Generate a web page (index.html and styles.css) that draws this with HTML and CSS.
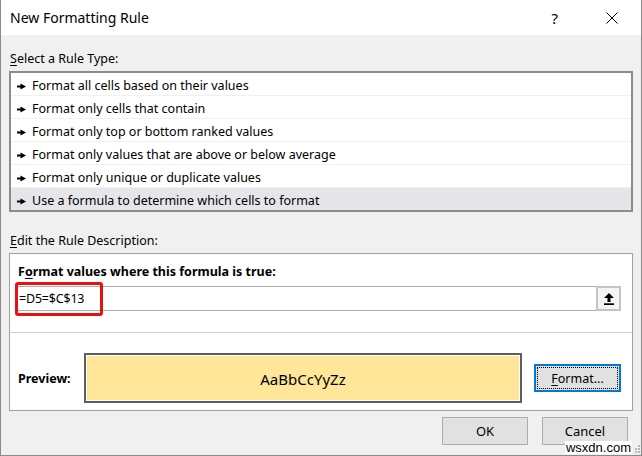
FILE: index.html
```html
<!DOCTYPE html>
<html>
<head>
<meta charset="utf-8">
<link rel="stylesheet" href="styles.css">
</head>
<body>
<div class="window">
  <div class="titlebar">
    <span class="title">New Formatting Rule</span>
    <div class="tb-buttons">
      <span class="help">?</span>
      <span class="close"><svg width="12" height="12" viewBox="0 0 12 12"><path d="M0.5 0.5 L11.5 11.5 M11.5 0.5 L0.5 11.5" stroke="#000" stroke-width="1" fill="none"/></svg></span>
    </div>
  </div>
  <div class="body">
    <div class="label label-top"><u>S</u>elect a Rule Type:</div>
    <div class="listbox">
      <div class="row"><svg class="arrow" width="9" height="7" viewBox="0 0 9 7"><path d="M0 2.6 H3.5 V0.5 L9 3.5 L3.5 6.5 V4.4 H0 Z" fill="#000"/></svg>Format all cells based on their values</div>
      <div class="row"><svg class="arrow" width="9" height="7" viewBox="0 0 9 7"><path d="M0 2.6 H3.5 V0.5 L9 3.5 L3.5 6.5 V4.4 H0 Z" fill="#000"/></svg>Format only cells that contain</div>
      <div class="row"><svg class="arrow" width="9" height="7" viewBox="0 0 9 7"><path d="M0 2.6 H3.5 V0.5 L9 3.5 L3.5 6.5 V4.4 H0 Z" fill="#000"/></svg>Format only top or bottom ranked values</div>
      <div class="row"><svg class="arrow" width="9" height="7" viewBox="0 0 9 7"><path d="M0 2.6 H3.5 V0.5 L9 3.5 L3.5 6.5 V4.4 H0 Z" fill="#000"/></svg>Format only values that are above or below average</div>
      <div class="row"><svg class="arrow" width="9" height="7" viewBox="0 0 9 7"><path d="M0 2.6 H3.5 V0.5 L9 3.5 L3.5 6.5 V4.4 H0 Z" fill="#000"/></svg>Format only unique or duplicate values</div>
      <div class="row selected"><svg class="arrow" width="9" height="7" viewBox="0 0 9 7"><path d="M0 2.6 H3.5 V0.5 L9 3.5 L3.5 6.5 V4.4 H0 Z" fill="#000"/></svg>Use a formula to determine which cells to format</div>
    </div>
    <div class="label label-desc"><u>E</u>dit the Rule Description:</div>
    <div class="panel">
      <div class="panel-top">
        <div class="panel-title">F<u>o</u>rmat values where this formula is true:</div>
        <div class="formula-row">
          <div class="formula-input"><span class="formula-text">=D5=$C$13</span></div>
          <div class="collapse-btn">
            <svg width="10" height="12" viewBox="0 0 10 12"><path d="M5 0 L0 5 H3.5 V9 H6.5 V5 H10 Z" fill="#000"/><rect x="0" y="10.3" width="10" height="1.7" fill="#000"/></svg>
          </div>
          <div class="highlight"></div>
        </div>
      </div>
      <div class="sep"></div>
      <div class="preview-row">
        <span class="preview-label">Preview:</span>
        <div class="preview-box"><div class="preview-inner">AaBbCcYyZz</div></div>
        <div class="btn format-btn"><span class="focus"><u>F</u>ormat...</span></div>
      </div>
    </div>
    <div class="footer">
      <div class="btn">OK</div>
      <div class="btn">Cancel</div>
    </div>
  </div>
  <div class="watermark">wsxdn.com</div>
  <svg class="grip" width="8" height="10" viewBox="0 0 8 10">
    <rect x="5" y="1" width="2" height="2" fill="#b8b8b8"/>
    <rect x="2" y="4" width="2" height="2" fill="#b8b8b8"/>
    <rect x="5" y="4" width="2" height="2" fill="#b8b8b8"/>
    <rect x="2" y="7" width="2" height="2" fill="#b8b8b8"/>
    <rect x="5" y="7" width="2" height="2" fill="#b8b8b8"/>
  </svg>
</div>
</body>
</html>
```

FILE: styles.css
```css
* { box-sizing: border-box; }
html, body { margin: 0; padding: 0; }
body {
  font-family: "Noto Sans", "Open Sans", sans-serif;
  font-size: 12.5px;
  color: #000;
  background: #f0f0f0;
}
u { text-decoration: underline; text-underline-offset: 2px; }
.window {
  position: relative;
  width: 642px;
  height: 456px;
  background: #f0f0f0;
  border-left: 1px solid #8a8a8a;
  border-right: 1px solid #8a8a8a;
  border-bottom: 1px solid #8a8a8a;
  overflow: hidden;
}
.titlebar {
  height: 35px;
  background: #fff;
  display: flex;
  align-items: center;
  justify-content: space-between;
}
.title {
  font-size: 14px;
  padding-left: 9px;
}
.tb-buttons {
  display: flex;
  align-items: center;
  padding-right: 23px;
}
.help {
  font-size: 15px;
  margin-right: 48px;
}
.close { display: flex; }
.body {
  padding: 0 8px;
}
.label {
  height: 18px;
  line-height: 18px;
  padding-left: 1px;
}
.label-top { margin-top: 15px; margin-bottom: 3px; }
.label-desc { margin-top: 20px; margin-bottom: 3px; }
.listbox {
  background: #fff;
  border: 2px solid #8c8c8c;
}
.row {
  height: 23px;
  line-height: 18px;
  border-bottom: 1px solid #f0f0f0;
  padding: 4px 0 0 6px;
  display: flex;
  align-items: center;
  white-space: nowrap;
}
.row:last-child { border-bottom: none; height: 22px; }
.row.selected { background: #e6e6ea; }
.arrow { margin-right: 6px; flex: none; }
.panel {
  background: #fff;
  border: 1px solid #a0a0a0;
  height: 158px;
}
.panel-top {
  padding: 9px 11px 0 6px;
}
.panel-title {
  font-weight: bold;
  height: 18px;
  line-height: 18px;
  padding-left: 2px;
  white-space: nowrap;
}
.formula-row {
  position: relative;
  display: flex;
  margin-top: 5px;
  height: 25px;
}
.formula-input {
  flex: 1;
  border: 1px solid #adadad;
  border-right: none;
  display: flex;
  align-items: center;
  padding-left: 2px;
}
.formula-text { letter-spacing: -0.2px; }
.collapse-btn {
  width: 25px;
  height: 25px;
  border: 2px solid #c4c4c4;
  background: #f5f5f5;
  display: flex;
  align-items: center;
  justify-content: center;
}
.highlight {
  position: absolute;
  left: -1px;
  top: -4px;
  width: 88px;
  height: 34px;
  border: 3px solid #e81010;
  border-radius: 3px;
}
.sep {
  margin-top: 21px;
  height: 1px;
  background: #cfcfcf;
}
.preview-row {
  display: flex;
  align-items: center;
  padding: 20px 0 0 8px;
}
.preview-label {
  font-weight: bold;
  width: 66px;
}
.preview-box {
  width: 438px;
  height: 50px;
  border: 2px solid #5e5e5e;
  padding: 1px;
  background: #fff;
}
.preview-inner {
  height: 100%;
  background: #ffe699;
  display: flex;
  align-items: center;
  justify-content: center;
  font-size: 15px;
  padding-top: 2px;
}
.btn {
  background: #e1e1e1;
  border: 1px solid #adadad;
  display: flex;
  align-items: center;
  justify-content: center;
  width: 86px;
  height: 28px;
  font-size: 13px;
}
.format-btn {
  margin-left: 12px;
  width: 87px;
  border: 2px solid #0078d7;
  padding: 1px;
  font-size: 12.5px;
}
.focus {
  flex: 1;
  height: 100%;
  border: 1px dotted #000;
  display: flex;
  align-items: center;
  justify-content: center;
}
.footer {
  display: flex;
  justify-content: flex-end;
  gap: 14px;
  padding: 6px 5px 0 0;
}
.watermark {
  position: absolute;
  right: 9px;
  bottom: 1px;
  background: #fff;
  font-family: "Liberation Sans", sans-serif;
  font-size: 13px;
  line-height: 13px;
  padding: 0 1px;
}
.grip {
  position: absolute;
  right: 0;
  bottom: 1px;
}
```
